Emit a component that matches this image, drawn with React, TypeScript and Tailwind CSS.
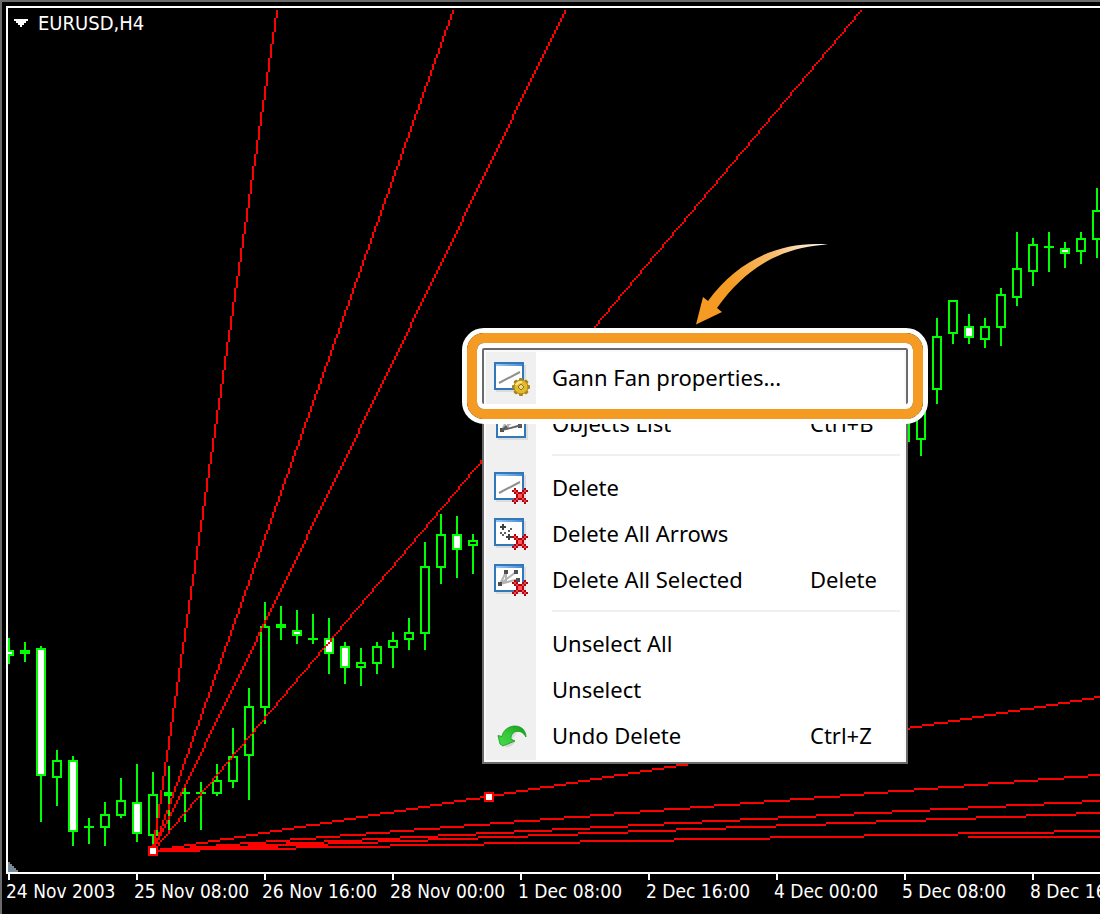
import React from 'react';

type Fill = 'hollow' | 'white' | 'solid';

interface Candle {
  x: number;
  high: number;
  low: number;
  top: number;
  bottom: number;
  fill: Fill;
}

const candle = (x: number, high: number, low: number, top: number, bottom: number, fill: Fill = 'hollow'): Candle => ({
  x, high, low, top, bottom, fill,
});

const CANDLES: Candle[] = [
  candle(9, 638, 664, 650, 656, 'white'),
  candle(25, 642, 662, 650, 654, 'solid'),
  candle(41, 646, 822, 648, 776, 'white'),
  candle(57, 750, 806, 760, 778),
  candle(73, 756, 846, 760, 832, 'white'),
  candle(89, 818, 844, 826, 828, 'solid'),
  candle(105, 802, 846, 814, 828),
  candle(121, 778, 818, 800, 816),
  candle(137, 764, 842, 802, 834, 'white'),
  candle(153, 772, 844, 794, 836),
  candle(169, 766, 830, 792, 796, 'solid'),
  candle(185, 788, 822, 792, 794, 'solid'),
  candle(201, 782, 830, 792, 794, 'solid'),
  candle(217, 764, 796, 780, 794),
  candle(233, 728, 788, 756, 782),
  candle(249, 688, 800, 706, 756),
  candle(265, 602, 724, 626, 708),
  candle(281, 606, 640, 624, 628, 'solid'),
  candle(297, 610, 644, 630, 636, 'white'),
  candle(313, 614, 644, 638, 640, 'solid'),
  candle(329, 618, 674, 638, 654, 'white'),
  candle(345, 642, 684, 646, 668, 'white'),
  candle(361, 648, 686, 662, 668),
  candle(377, 642, 674, 646, 664),
  candle(393, 632, 668, 640, 648),
  candle(409, 618, 650, 632, 640),
  candle(425, 542, 650, 566, 634),
  candle(441, 514, 584, 534, 568),
  candle(457, 516, 578, 534, 550, 'white'),
  candle(473, 534, 574, 540, 546),
  candle(905, 400, 442, 400, 442),
  candle(921, 380, 456, 390, 440),
  candle(937, 318, 404, 336, 390),
  candle(953, 300, 344, 300, 334),
  candle(969, 314, 344, 326, 338, 'white'),
  candle(985, 318, 348, 326, 340),
  candle(1001, 288, 346, 294, 328),
  candle(1017, 232, 306, 268, 298),
  candle(1033, 238, 286, 244, 272),
  candle(1049, 232, 272, 246, 248, 'solid'),
  candle(1065, 242, 268, 248, 254, 'white'),
  candle(1081, 232, 264, 238, 252),
  candle(1097, 188, 258, 210, 240),
];

// far ends of the fan rays, all of them start in ANCHOR
const ANCHOR = [152, 850];
const RAYS = [
  [276, 10],
  [452, 10],
  [564, 10],
  [860, 10],
  [1100, 696],
  [1100, 774],
  [1100, 800],
  [1100, 812],
  [1100, 830],
];

const DATES = [
  '24 Nov 2003',
  '25 Nov 08:00',
  '26 Nov 16:00',
  '28 Nov 00:00',
  '1 Dec 08:00',
  '2 Dec 16:00',
  '4 Dec 00:00',
  '5 Dec 08:00',
  '8 Dec 16:00',
];

// stair-stepped line on a 2px grid
const pixelLine = (x1: number, y1: number, x2: number, y2: number) => {
  const dx = (x2 - x1) / 2;
  const dy = (y2 - y1) / 2;
  const steps = Math.max(Math.abs(dx), Math.abs(dy));
  let d = '';
  for (let i = 0; i <= steps; i++) {
    const x = x1 + 2 * Math.round((dx * i) / steps);
    const y = y1 + 2 * Math.round((dy * i) / steps);
    d += `M${x} ${y}h2v2h-2z`;
  }
  return d;
};

const CandleShape: React.FC<{ c: Candle }> = ({ c }) => (
  <g>
    <rect x={c.x - 1} y={c.high} width={2} height={c.low - c.high} fill="#00ff00" />
    <rect x={c.x - 5} y={c.top} width={10} height={c.bottom - c.top} fill="#00ff00" />
    {c.fill !== 'solid' && (
      <rect x={c.x - 3} y={c.top + 2} width={6} height={c.bottom - c.top - 4} fill={c.fill === 'white' ? '#fff' : '#000'} />
    )}
  </g>
);

const Handle: React.FC<{ x: number; y: number }> = ({ x, y }) => (
  <g>
    <rect x={x - 5} y={y - 5} width={10} height={10} fill="#f00" />
    <rect x={x - 3} y={y - 3} width={6} height={6} fill="#fff" />
  </g>
);

const Chart = () => (
  <svg className="block shrink-0" width={1092} height={864} viewBox="8 8 1092 864" shapeRendering="crispEdges" aria-hidden="true">
    {CANDLES.map((c) => (
      <CandleShape key={c.x} c={c} />
    ))}
    {RAYS.map(([x, y]) => (
      <path key={`${x}-${y}`} d={pixelLine(ANCHOR[0], ANCHOR[1], x, y)} fill="#f00" />
    ))}
    <rect x={968} y={836} width={132} height={2} fill="#f00" />
    <Handle x={153} y={851} />
    <Handle x={489} y={797} />
    <path d="M8 862h2v2h2v2h2v2h2v2h2v2H8z" fill="#778899" />
  </svg>
);

const WindowFrame = () => (
  <g>
    <path d="M2 28h28V3h2v27H2z" fill="#dcdcdc" />
    <rect width={30} height={28} fill="#3277b8" />
    <rect x={2} y={2} width={26} height={2} fill="url(#title-bar)" />
    <rect x={2} y={4} width={26} height={22} fill="#fff" />
  </g>
);

// 8x8 bitmap cross, two pixels per cell
const RedCross = () => (
  <g transform="translate(18 16) scale(2)">
    <path
      d="M1 0h1v1h1v1h2v-1h1v-1h1v1h1v1h-1v1h-1v2h1v1h1v1h-1v1h-1v-1h-1v-1h-2v1h-1v1h-1v-1h-1v-1h1v-1h1v-2h-1v-1h-1v-1h1z"
      fill="#b4000f"
    />
    <path d="M1 1h1v1h-1zM2 2h1v1h-1zM5 2h1v1h-1zM6 1h1v1h-1zM2 5h1v1h-1zM1 6h1v1h-1zM5 5h1v1h-1zM6 6h1v1h-1z" fill="#dc4a50" />
    <path d="M3 3h2v2h-2z" fill="#ff5555" />
  </g>
);

const Gear = () => (
  <g>
    {[0, 45, 90, 135].map((a) => (
      <rect key={a} x={25} y={16} width={4} height={18} rx={1} fill="#a8841a" transform={`rotate(${a} 27 25)`} />
    ))}
    <circle cx={27} cy={25} r={7} fill="#e2ba2c" stroke="#a8841a" />
    <path d="M22 23a6 6 0 0 1 6-3" stroke="#fbe88a" strokeWidth={2} fill="none" />
    <path d="M27 22l3 3-3 3-3-3z" fill="#e8d890" stroke="#8f7410" />
  </g>
);

const DiagonalLine = () => (
  <path d="M5 21L26 10" stroke="#909090" strokeWidth={2} />
);

const Nodes = () => (
  <g>
    <path d="M6 20L12 8M6 20L22 8M6 20L25 15M12 8v10" stroke="#b4b4b4" strokeWidth={2} fill="none" />
    <path d="M4 18h4v4H4zM10 6h4v4h-4zM20 6h4v4h-4zM22 14h4v4h-4z" fill="#505050" />
  </g>
);

type IconName = 'properties' | 'list' | 'delete' | 'arrows' | 'selected' | 'undo';

const MenuIcon: React.FC<{ name: IconName }> = ({ name }) => (
  <svg className="block overflow-visible" width={36} height={32} viewBox="0 0 36 32" aria-hidden="true">
    <defs>
      <linearGradient id="title-bar">
        <stop offset="0" stopColor="#9cc8fa" />
        <stop offset="1" stopColor="#4a8bd0" />
      </linearGradient>
      <linearGradient id="undo-green" x1="0" y1="1" x2="1" y2="0">
        <stop offset="0" stopColor="#4ad84e" />
        <stop offset="0.5" stopColor="#34c83a" />
        <stop offset="1" stopColor="#16961c" />
      </linearGradient>
    </defs>
    {name === 'properties' && (
      <>
        <WindowFrame />
        <DiagonalLine />
        <Gear />
      </>
    )}
    {name === 'list' && (
      <g transform="translate(2 2)">
        <WindowFrame />
        <Nodes />
        <path d="M4 21l6-6 2 3 14-4v2l-16 4z" fill="#606060" />
      </g>
    )}
    {name === 'delete' && (
      <>
        <WindowFrame />
        <DiagonalLine />
        <RedCross />
      </>
    )}
    {name === 'arrows' && (
      <>
        <WindowFrame />
        <path d="M6 9h6M9 6v6M12 19h6M15 16v6" stroke="#404040" strokeWidth={2} />
        <path d="M16 10h2v2h-2zM14 12h2v2h-2zM10 14h2v2h-2zM8 16h2v2H8zM6 14h2v2H6z" fill="#606060" />
        <RedCross />
      </>
    )}
    {name === 'selected' && (
      <>
        <WindowFrame />
        <Nodes />
        <RedCross />
      </>
    )}
    {name === 'undo' && (
      <>
        <path d="M11 27q6 1 10-5l-3-3q0-5 5-6z" fill="#d6d6d6" />
        <path
          d="M4 15.500L8 16.500C9 10 15 6 21 6C28 6 32 11 32 17C29 12 26 11 23 11.500C19 12 17 15 17 19L21 21L9 26L6 24Z"
          fill="url(#undo-green)"
          stroke="#129a1a"
          strokeWidth={0.8}
        />
      </>
    )}
  </svg>
);

interface MenuRowProps {
  label: string;
  icon?: IconName;
  shortcut?: string;
}

const MenuRow: React.FC<MenuRowProps> = ({ label, icon, shortcut }) => (
  <button type="button" role="menuitem" className="flex h-[46px] w-full items-center text-left">
    <span className="w-[50px] shrink-0 pl-2">{icon && <MenuIcon name={icon} />}</span>
    <span className="flex-1 whitespace-nowrap pb-0.5 pl-4">{label}</span>
    {shortcut && <span className="w-[94px] shrink-0 pb-0.5">{shortcut}</span>}
  </button>
);

const Separator = () => <div role="separator" className="mb-[9px] ml-[66px] mr-1 mt-[7px] h-0.5 bg-[#f0f0f0]" />;

const ContextMenu = () => (
  <div
    role="menu"
    className="absolute left-[474px] top-[340px] w-[426px] border-2 border-[#6b6b6b] bg-[#fafafa] p-0.5 font-['Noto_Sans','Open_Sans',sans-serif] text-[22px] leading-7 text-black"
  >
    <div className="bg-linear-to-r from-[#f0f0f0] from-[50px] to-white to-[50px] pb-px pt-[3px]">
      <MenuRow label="Gann Fan properties..." icon="properties" />
      <MenuRow label="Objects List" icon="list" shortcut="Ctrl+B" />
      <Separator />
      <MenuRow label="Delete" icon="delete" />
      <MenuRow label="Delete All Arrows" icon="arrows" />
      <MenuRow label="Delete All Selected" icon="selected" shortcut="Delete" />
      <Separator />
      <MenuRow label="Unselect All" />
      <MenuRow label="Unselect" />
      <MenuRow label="Undo Delete" icon="undo" shortcut="Ctrl+Z" />
    </div>
  </div>
);

// orange frame and arrow that point out the first menu entry
const Highlight = () => (
  <div className="pointer-events-none absolute left-[454px] top-[320px] h-24 w-[466px] rounded-[22px] border-[5px] border-white">
    <div className="h-full rounded-[17px] border-[10px] border-[#f59b23]">
      <div className="h-full rounded-[7px] border-[5px] border-white" />
    </div>
  </div>
);

const PointerArrow = () => (
  <svg className="pointer-events-none absolute left-[684px] top-[232px]" width={140} height={88} viewBox="692 240 140 88" aria-hidden="true">
    <defs>
      <linearGradient id="arrow-fade" gradientUnits="userSpaceOnUse" x1="712" y1="306" x2="828" y2="244">
        <stop offset="0.2" stopColor="#f59b23" />
        <stop offset="0.6" stopColor="#f8bd6d" />
        <stop offset="1" stopColor="#fff" />
      </linearGradient>
    </defs>
    <path d="M696 324.500L703 297L708 301C740 257 784 241 828 244.500C785 247 748 264 717 308L722 312Z" fill="url(#arrow-fade)" />
  </svg>
);

export default function App() {
  return (
    <main className="flex min-h-screen flex-col overflow-hidden border-l-2 border-t-2 border-[#6b6b6b] bg-black pl-1 pt-1 font-['DejaVu_Sans_Condensed','DejaVu_Sans',sans-serif] text-[19px] leading-6 text-white">
      <section className="relative flex-1 overflow-hidden border-2 border-r-0 border-white">
        <Chart />
        <button type="button" className="absolute left-1.5 top-[3px] flex items-center gap-2.5 text-xl leading-6">
          <svg width={14} height={8} viewBox="0 0 14 8" shapeRendering="crispEdges" aria-hidden="true">
            <path d="M0 0h14v2h-2v2h-2v2H8v2H6V6H4V4H2V2H0z" fill="#fff" />
          </svg>
          EURUSD,H4
        </button>
        <ContextMenu />
        <Highlight />
        <PointerArrow />
      </section>
      <footer className="flex h-10 overflow-hidden">
        {DATES.map((date) => (
          <div key={date} className="w-32 shrink-0 whitespace-nowrap">
            <div className="ml-0.5 h-1.5 w-0.5 bg-white" />
            <div className="leading-[22px]">{date}</div>
          </div>
        ))}
      </footer>
    </main>
  );
}
